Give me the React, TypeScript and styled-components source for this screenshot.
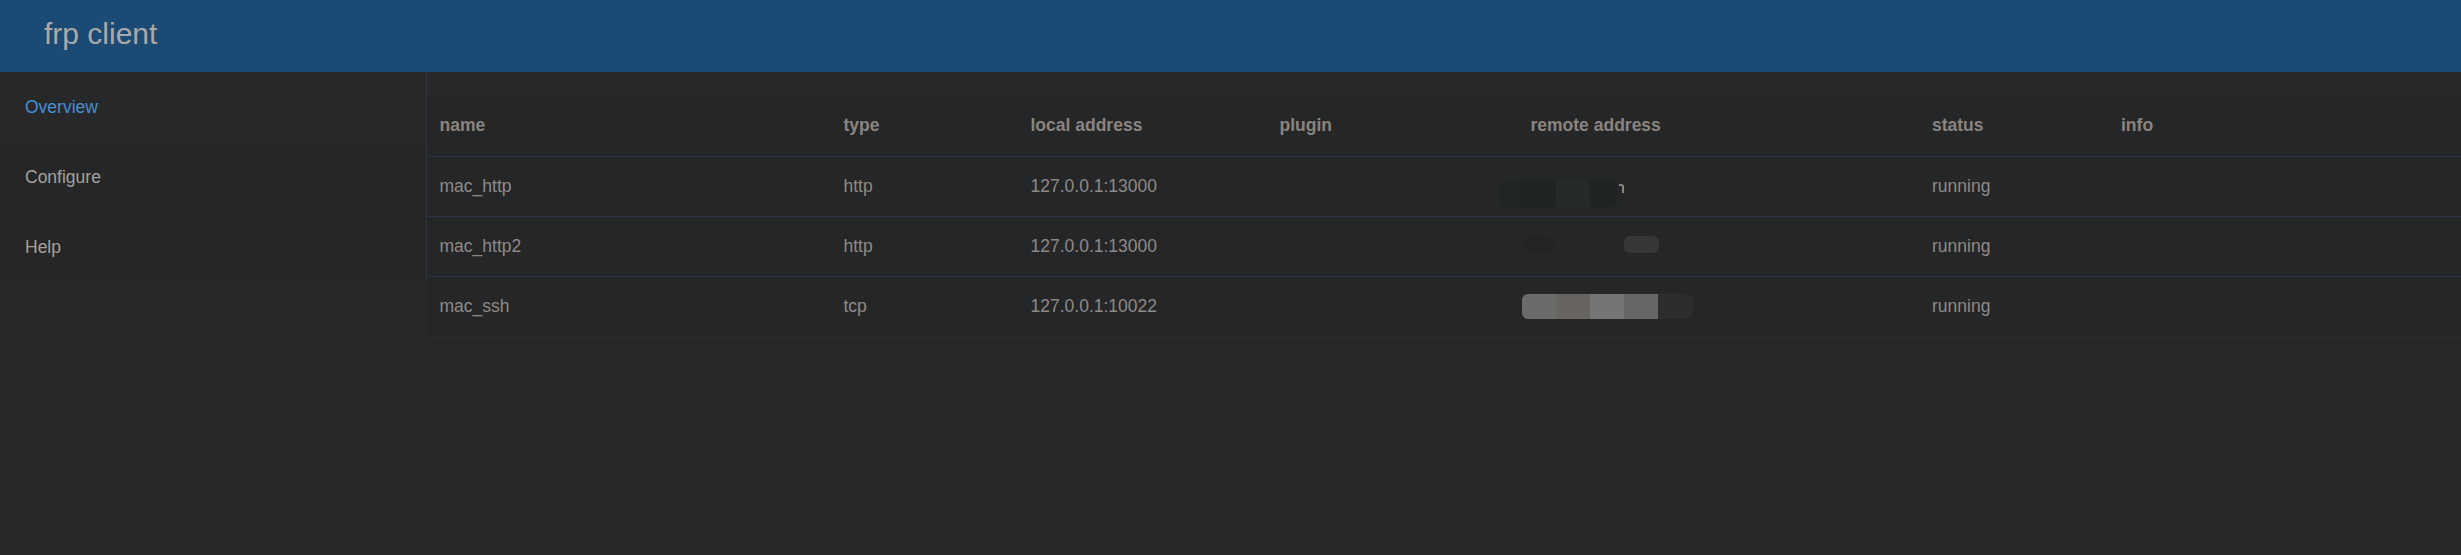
import React from "react";
import styled, { createGlobalStyle } from "styled-components";

const GlobalStyle = createGlobalStyle`
  html, body {
    margin: 0;
    padding: 0;
    background: #272829;
  }
  body {
    font-family: "Liberation Sans", Arial, sans-serif;
  }
  * { box-sizing: border-box; }
`;

const Page = styled.div`
  min-height: 555px;
  display: flex;
  flex-direction: column;
  background: #272829;
`;

const Header = styled.header`
  height: 72px;
  flex: none;
  background: #1b4a75;
  display: flex;
  align-items: center;
  padding-left: 44px;
`;

const Brand = styled.a`
  font-size: 30px;
  color: #a9a9a9;
  text-decoration: none;
  line-height: 1;
  margin-top: -4px;
`;

const Body = styled.div`
  display: flex;
  align-items: flex-start;
  flex: 1;
`;

const Sidebar = styled.nav`
  width: 427px;
  flex: none;
  background: #252628;
  border-right: 1px solid #333437;
  display: flex;
  flex-direction: column;
`;

const MenuItem = styled.a<{ $active?: boolean }>`
  height: 70px;
  display: flex;
  align-items: center;
  padding-left: 25px;
  font-size: 17.5px;
  text-decoration: none;
  color: ${(p) => (p.$active ? "#4a8ed5" : "#a6a19c")};
  background: ${(p) => (p.$active ? "#272829" : "transparent")};
`;

const Main = styled.main`
  flex: 1;
  padding-top: 24px;
`;

const Table = styled.table`
  width: 100%;
  border-collapse: collapse;
  table-layout: fixed;
  background: #252628;
`;

const HeadCell = styled.th`
  height: 60px;
  padding: 0 12.5px;
  text-align: left;
  font-size: 17.5px;
  font-weight: 700;
  color: #8a847f;
  border-bottom: 1px solid #2a3449;
`;

const Row = styled.tr<{ $last?: boolean }>`
  & > td {
    border-bottom: 1px solid ${(p) => (p.$last ? "#2c2d2f" : "#2a3449")};
  }
`;

const Cell = styled.td`
  position: relative;
  height: 60px;
  padding: 0 12.5px;
  font-size: 17.5px;
  color: #8f8a86;
  white-space: nowrap;
`;

const Blur = styled.div<{ $left: number; $top: number; $height: number }>`
  position: absolute;
  left: ${(p) => 12.5 + p.$left}px;
  top: ${(p) => p.$top}px;
  height: ${(p) => p.$height}px;
  display: flex;
  border-radius: 6px;
  overflow: hidden;
`;

const BlurSeg = styled.span<{ $w: number; $c: string }>`
  width: ${(p) => p.$w}px;
  height: 100%;
  background: ${(p) => p.$c};
`;

const GlyphBit = styled.span<{ $left: number }>`
  position: absolute;
  left: ${(p) => 12.5 + p.$left}px;
  top: 27px;
  width: 5px;
  height: 9px;
  border-top: 2px solid #8a8682;
  border-right: 2px solid #8a8682;
  border-top-right-radius: 3px;
`;

type Seg = { w: number; c: string };
type Redaction = { left: number; top: number; height: number; segs: Seg[] };

const columns = [
  { key: "name", label: "name", width: 404 },
  { key: "type", label: "type", width: 187 },
  { key: "local", label: "local address", width: 249 },
  { key: "plugin", label: "plugin", width: 251 },
  { key: "remote", label: "remote address", width: 401.5 },
  { key: "status", label: "status", width: 189 },
  { key: "info", label: "info", width: undefined as number | undefined },
];

const rows: {
  name: string;
  type: string;
  local: string;
  plugin: string;
  status: string;
  info: string;
  redactions: Redaction[];
  glyph?: number;
}[] = [
  {
    name: "mac_http",
    type: "http",
    local: "127.0.0.1:13000",
    plugin: "",
    status: "running",
    info: "",
    redactions: [
      {
        left: -31,
        top: 24,
        height: 26,
        segs: [
          { w: 22, c: "#222525" },
          { w: 34, c: "#1f2322" },
          { w: 34, c: "#252a2a" },
          { w: 27, c: "#1f2323" },
        ],
      },
    ],
    glyph: 88,
  },
  {
    name: "mac_http2",
    type: "http",
    local: "127.0.0.1:13000",
    plugin: "",
    status: "running",
    info: "",
    redactions: [
      { left: -8, top: 19, height: 17, segs: [{ w: 32, c: "#232426" }] },
      { left: 93, top: 19, height: 17, segs: [{ w: 35, c: "#353638" }] },
    ],
  },
  {
    name: "mac_ssh",
    type: "tcp",
    local: "127.0.0.1:10022",
    plugin: "",
    status: "running",
    info: "",
    redactions: [
      {
        left: -9,
        top: 17,
        height: 25,
        segs: [
          { w: 34, c: "#6a6c6a" },
          { w: 34, c: "#676462" },
          { w: 34, c: "#747673" },
          { w: 34, c: "#646765" },
          { w: 35, c: "#2c2e2b" },
        ],
      },
    ],
  },
];

export default function App() {
  return (
    <Page>
      <GlobalStyle />
      <Header>
        <Brand href="#">frp client</Brand>
      </Header>
      <Body>
        <Sidebar>
          <MenuItem $active href="#">Overview</MenuItem>
          <MenuItem href="#">Configure</MenuItem>
          <MenuItem href="#">Help</MenuItem>
        </Sidebar>
        <Main>
          <Table>
            <colgroup>
              {columns.map((c) => (
                <col key={c.key} style={c.width ? { width: c.width } : undefined} />
              ))}
            </colgroup>
            <thead>
              <tr>
                {columns.map((c) => (
                  <HeadCell key={c.key}>{c.label}</HeadCell>
                ))}
              </tr>
            </thead>
            <tbody>
              {rows.map((r, i) => (
                <Row key={r.name} $last={i === rows.length - 1}>
                  <Cell>{r.name}</Cell>
                  <Cell>{r.type}</Cell>
                  <Cell>{r.local}</Cell>
                  <Cell>{r.plugin}</Cell>
                  <Cell>
                    {r.redactions.map((b, j) => (
                      <Blur key={j} $left={b.left} $top={b.top} $height={b.height}>
                        {b.segs.map((s, k) => (
                          <BlurSeg key={k} $w={s.w} $c={s.c} />
                        ))}
                      </Blur>
                    ))}
                    {r.glyph !== undefined && <GlyphBit $left={r.glyph} />}
                  </Cell>
                  <Cell>{r.status}</Cell>
                  <Cell>{r.info}</Cell>
                </Row>
              ))}
            </tbody>
          </Table>
        </Main>
      </Body>
    </Page>
  );
}
